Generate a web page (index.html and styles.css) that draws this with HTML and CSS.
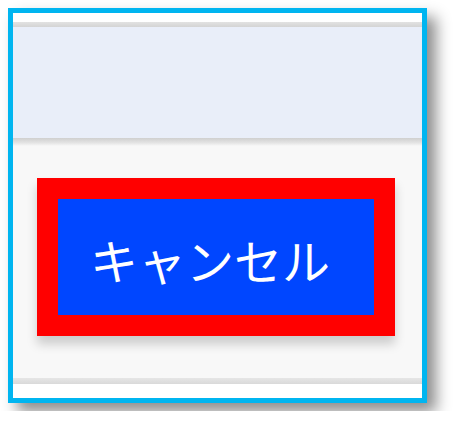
FILE: index.html
```html
<!DOCTYPE html>
<html lang="ja">
<head>
<meta charset="utf-8">
<link rel="stylesheet" href="styles.css">
</head>
<body>
<div class="frame">
  <div class="strip-top"></div>
  <div class="sep sep-top"></div>
  <div class="header"></div>
  <div class="sep sep-mid"></div>
  <div class="content">
    <button class="cancel">キャンセル</button>
  </div>
  <div class="sep sep-bottom"></div>
  <div class="strip-bottom"></div>
</div>
</body>
</html>
```
FILE: styles.css
```css
html, body {
  margin: 0;
  padding: 0;
  background: #ffffff;
}
.frame {
  margin: 8px;
  width: 409px;
  height: 385px;
  border: 5px solid #00b5f0;
  box-shadow: 9px 9px 14px rgba(0, 0, 0, 0.45);
  display: flex;
  flex-direction: column;
  background: #ffffff;
}
.strip-top {
  height: 9px;
  background: #ffffff;
}
.sep-top {
  height: 5px;
  background: linear-gradient(#e2e2e2, #d4d4d4);
}
.header {
  height: 111px;
  background: #e9eef9;
}
.sep-mid {
  height: 8px;
  background: linear-gradient(#cfcfcf, #e4e4e4 60%, #f8f8f8);
}
.content {
  flex: 1;
  background: #f8f8f8;
  padding: 32px 0 0 24px;
}
.sep-bottom {
  height: 6px;
  background: linear-gradient(#e6e6e6, #d9d9d9);
}
.strip-bottom {
  height: 14px;
  background: #ffffff;
}
.cancel {
  display: flex;
  align-items: center;
  justify-content: flex-start;
  box-sizing: content-box;
  width: 284px;
  height: 116px;
  margin: 0;
  padding: 4px 0 0 32px;
  height: 112px;
  border: 21px solid #ff0000;
  background: #0046ff;
  color: #ffffff;
  font-family: "Noto Sans CJK JP", sans-serif;
  font-size: 48px;
  font-weight: 400;
  letter-spacing: 0;
  box-shadow: 0 8px 10px rgba(0, 0, 0, 0.18);
  cursor: pointer;
}
```
